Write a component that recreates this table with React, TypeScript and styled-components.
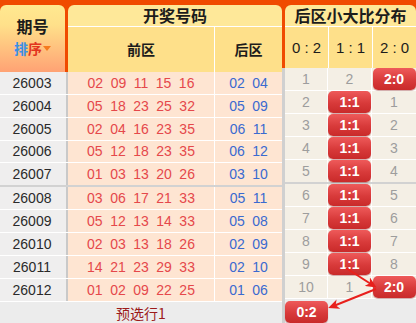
import React from 'react';
import styled, { createGlobalStyle } from 'styled-components';

const Global = createGlobalStyle`
  html, body { margin: 0; padding: 0; background: #ececec; }
  body { font-family: "Liberation Sans", "Noto Sans CJK SC", sans-serif; }
  * { box-sizing: border-box; }
`;

const ORANGE = '#f04a00';

const Page = styled.div`
  position: relative;
  width: 416px;
  height: 323px;
  overflow: hidden;
  display: flex;
  background: #ececec;
`;

const LeftPanel = styled.div`
  width: 282px;
  display: flex;
  flex-direction: column;
`;

const RightPanel = styled.div`
  width: 134px;
  display: flex;
  flex-direction: column;
`;

const LeftHead = styled.div`
  height: 72px;
  padding-top: 5px;
  background: ${ORANGE};
  display: grid;
  grid-template-columns: 65px 214px;
  column-gap: 3px;
`;

const IssueHead = styled.div`
  border-radius: 6px 6px 0 0;
  background: linear-gradient(#ffe990, #ffe08a 30%, #ffa274);
  display: flex;
  flex-direction: column;
  align-items: center;
  justify-content: flex-start;
  padding-top: 10px;
`;

const HeadTitle = styled.div`
  font-family: "Noto Sans CJK SC", sans-serif;
  font-weight: 700;
  font-size: 16px;
  line-height: 23px;
  height: 23px;
  color: #1c1c1c;
  white-space: nowrap;
`;

const SortLabel = styled.div`
  display: flex;
  align-items: center;
  height: 21px;
  font-family: "Noto Sans CJK SC", sans-serif;
  font-weight: 700;
  font-size: 14px;
  line-height: 21px;
`;

const SortChar = styled.span<{ $c: string }>`
  color: ${p => p.$c};
`;

const SortArrow = styled.span`
  width: 0;
  height: 0;
  margin-left: 1px;
  border-left: 4px solid transparent;
  border-right: 4px solid transparent;
  border-top: 5px solid #f57a1e;
`;

const GroupHead = styled.div`
  display: flex;
  flex-direction: column;
`;

const GroupTitle = styled.div`
  height: 22px;
  border-radius: 6px 6px 0 0;
  background: #fee899;
  border-bottom: 1px solid #fff;
  display: flex;
  align-items: center;
  justify-content: center;
  overflow: visible;
`;

const SubRow = styled.div<{ $cols: string }>`
  flex: 1;
  display: grid;
  grid-template-columns: ${p => p.$cols};
  background: #fee08a;
`;

const SubCell = styled.div<{ $line?: boolean; $mono?: boolean }>`
  display: flex;
  align-items: center;
  justify-content: center;
  border-left: ${p => (p.$line ? '1px solid #fff' : 'none')};
  font-family: ${p => (p.$mono ? '"Liberation Sans", sans-serif' : '"Noto Sans CJK SC", sans-serif')};
  font-weight: ${p => (p.$mono ? 400 : 700)};
  font-size: ${p => (p.$mono ? '15px' : '14px')};
  color: #1c1c1c;
  white-space: pre;
`;

const RightHead = styled.div`
  height: 68px;
  padding-top: 5px;
  padding-left: 3px;
  background: ${ORANGE};
  display: flex;
  flex-direction: column;
`;

const LeftRow = styled.div<{ $sep?: boolean }>`
  height: ${p => (p.$sep ? '24px' : '23px')};
  display: grid;
  grid-template-columns: 68px 147px 67px;
  border-bottom: ${p => (p.$sep ? '2px solid #d2d2d2' : '1px solid #fff')};
`;

const IssueCell = styled.div`
  background: #efeeee;
  border-right: 2px solid #c9c9c9;
  display: flex;
  align-items: center;
  justify-content: center;
  padding-right: 2px;
  font-size: 14px;
  color: #2a2a2a;
`;

const BallCell = styled.div<{ $line?: boolean; $color: string }>`
  background: #fee5d2;
  border-right: ${p => (p.$line ? '1px solid #fff' : 'none')};
  display: flex;
  align-items: center;
  justify-content: center;
  gap: 7.5px;
  font-size: 14px;
  color: ${p => p.$color};
`;

const LeftFoot = styled.div`
  flex: 1;
  display: flex;
  align-items: center;
  justify-content: center;
  font-family: "Noto Sans CJK SC", sans-serif;
  font-size: 14px;
  color: #9c1a1a;
  padding-top: 1px;
`;

const RightBody = styled.div`
  border-left: 3px solid #d0d0d0;
  display: flex;
  flex-direction: column;
  flex: 1;
`;

const StatRow = styled.div<{ $sep?: boolean }>`
  height: ${p => (p.$sep ? '24px' : '23px')};
  display: grid;
  grid-template-columns: 43px 44px 44px;
  border-bottom: ${p => (p.$sep ? '2px solid #d2d2d2' : '1px solid #fff')};
  background: #f4efe5;
`;

const StatCell = styled.div<{ $line?: boolean }>`
  display: flex;
  align-items: flex-start;
  justify-content: center;
  border-right: ${p => (p.$line ? '1px solid #fff' : 'none')};
  font-size: 14px;
  line-height: 22px;
  color: #9d9d9d;
`;

const StatFoot = styled.div`
  flex: 1;
  display: grid;
  grid-template-columns: 43px 44px 44px;
  padding-top: 2px;
  background: #ececec;
`;

const Badge = styled.span`
  display: flex;
  align-items: center;
  justify-content: center;
  width: 43px;
  height: 22px;
  border-radius: 5px;
  background: linear-gradient(#ee5a5a, #d83a3a 55%, #c92a2a);
  box-shadow: 0 1px 1px rgba(120, 0, 0, 0.35);
  color: #fff;
  font-weight: 700;
  font-size: 14px;
  line-height: 22px;
`;

const Overlay = styled.svg`
  position: absolute;
  left: 0;
  top: 0;
  pointer-events: none;
`;

type Row = [string, string[], string[]];

const rows: Row[] = [
  ['26003', ['02', '09', '11', '15', '16'], ['02', '04']],
  ['26004', ['05', '18', '23', '25', '32'], ['05', '09']],
  ['26005', ['02', '04', '16', '23', '35'], ['06', '11']],
  ['26006', ['05', '12', '18', '23', '35'], ['06', '12']],
  ['26007', ['01', '03', '13', '20', '26'], ['03', '10']],
  ['26008', ['03', '06', '17', '21', '33'], ['05', '11']],
  ['26009', ['05', '12', '13', '14', '33'], ['05', '08']],
  ['26010', ['02', '03', '13', '18', '26'], ['02', '09']],
  ['26011', ['14', '21', '23', '29', '33'], ['02', '10']],
  ['26012', ['01', '02', '09', '22', '25'], ['01', '06']],
];

const stats: string[][] = [
  ['1', '2', '*2:0'],
  ['2', '*1:1', '1'],
  ['3', '*1:1', '2'],
  ['4', '*1:1', '3'],
  ['5', '*1:1', '4'],
  ['6', '*1:1', '5'],
  ['7', '*1:1', '6'],
  ['8', '*1:1', '7'],
  ['9', '*1:1', '8'],
  ['10', '1', '*2:0'],
];

const renderStat = (v: string) => (v.startsWith('*') ? <Badge>{v.slice(1)}</Badge> : v);

export default function App() {
  return (
    <Page>
      <Global />
      <LeftPanel>
        <LeftHead>
          <IssueHead>
            <HeadTitle>期号</HeadTitle>
            <SortLabel>
              <SortChar $c="#3b8fe6">排</SortChar>
              <SortChar $c="#e2341e">序</SortChar>
              <SortArrow />
            </SortLabel>
          </IssueHead>
          <GroupHead>
            <GroupTitle>
              <HeadTitle>开奖号码</HeadTitle>
            </GroupTitle>
            <SubRow $cols="146px 68px">
              <SubCell>前区</SubCell>
              <SubCell $line>后区</SubCell>
            </SubRow>
          </GroupHead>
        </LeftHead>
        {rows.map((r, i) => (
          <LeftRow key={r[0]} $sep={i === 4}>
            <IssueCell>{r[0]}</IssueCell>
            <BallCell $line $color="#e5484b">
              {r[1].map((n, j) => (
                <span key={j}>{n}</span>
              ))}
            </BallCell>
            <BallCell $color="#3a6ad0">
              {r[2].map((n, j) => (
                <span key={j}>{n}</span>
              ))}
            </BallCell>
          </LeftRow>
        ))}
        <LeftFoot>预选行1</LeftFoot>
      </LeftPanel>
      <RightPanel>
        <RightHead>
          <GroupTitle>
            <HeadTitle>后区小大比分布</HeadTitle>
          </GroupTitle>
          <SubRow $cols="43px 44px 44px">
            <SubCell $mono>{'0 : 2'}</SubCell>
            <SubCell $mono $line>{'1 : 1'}</SubCell>
            <SubCell $mono $line>{'2 : 0'}</SubCell>
          </SubRow>
        </RightHead>
        <RightBody>
          {stats.map((s, i) => (
            <StatRow key={i} $sep={i === 4}>
              <StatCell $line>{renderStat(s[0])}</StatCell>
              <StatCell $line>{renderStat(s[1])}</StatCell>
              <StatCell>{renderStat(s[2])}</StatCell>
            </StatRow>
          ))}
          <StatFoot>
            <StatCell>
              <Badge>0:2</Badge>
            </StatCell>
            <StatCell />
            <StatCell />
          </StatFoot>
        </RightBody>
      </RightPanel>
      <Overlay width={416} height={323} viewBox="0 0 416 323">
        <defs>
          <marker id="ah" markerWidth="11" markerHeight="10" refX="8" refY="5" orient="auto" markerUnits="userSpaceOnUse">
            <path d="M0,0 L11,5 L0,10 L3,5 Z" fill="#e8201c" />
          </marker>
        </defs>
        <line x1="346" y1="268" x2="374" y2="286" stroke="#e8201c" strokeWidth="2" markerEnd="url(#ah)" />
        <line x1="376" y1="289" x2="331" y2="307" stroke="#e8201c" strokeWidth="2" markerEnd="url(#ah)" />
      </Overlay>
    </Page>
  );
}
